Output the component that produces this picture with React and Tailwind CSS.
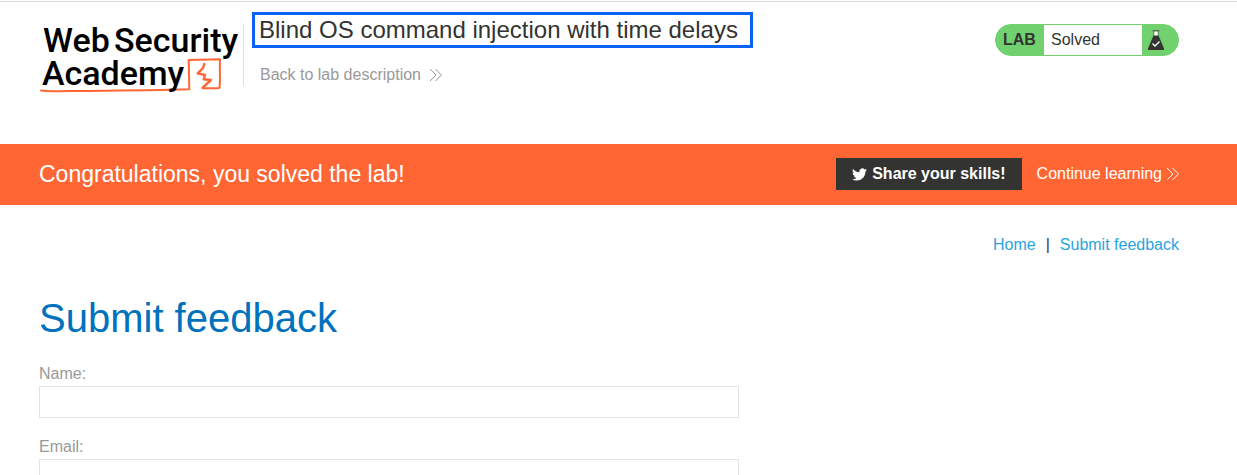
import clsx from "clsx";

const fields = [
  { id: "name", label: "Name:", type: "text" },
  { id: "email", label: "Email:", type: "email" },
];

function Chevrons({ className }) {
  return (
    <svg
      viewBox="0 0 14 14"
      className={clsx("h-[14px] w-[14px]", className)}
      fill="none"
      stroke="currentColor"
      aria-hidden="true"
    >
      <path d="M1 1l6 6-6 6M6.500 1l6 6-6 6" />
    </svg>
  );
}

function Logo() {
  return (
    <svg viewBox="0 0 204 76" className="block h-[76px] w-[204px]">
      {/* Underline running into the spark box */}
      <g fill="none" stroke="#ff6633" strokeWidth="2" strokeLinecap="round" strokeLinejoin="round">
        <path d="M2 71.500C8 72.600 20 72.200 40 72S110 71.500 150.300 70.300L149.700 41C159 40.300 170 40.500 181 40.300C180.500 50 181.500 60 180.500 69C174 69.500 168 69 163.700 69.200" />
        <path
          strokeWidth="2.400"
          d="M165.300 45L164 49L158.700 54.300L166 56L164.700 60.300L172 61L163.700 68.700"
        />
      </g>
      <text fill="#000" fontFamily="Roboto, sans-serif" fontSize="34" fontWeight="500">
        <tspan x="4" y="33">Web</tspan>
        <tspan x="75" y="33">Security</tspan>
        <tspan x="3" y="66">Academy</tspan>
      </text>
    </svg>
  );
}

function Flask() {
  return (
    <svg viewBox="0 0 16 20" className="h-5 w-4" aria-hidden="true">
      <path d="M6 1h4v5H6z" fill="#fff" />
      <path d="M4.500 0h7v1.200h-1V6h-.8V1.500H6.300V6h-.8V1.200h-1z" fill="#55705a" />
      <path d="M5.500 5.500h5L16 18.500q.3 1.500-1 1.500H1q-1.300 0-1-1.500z" fill="#333332" />
      <path d="M4.500 13.500l2.500 2.500 4.500-4.500" fill="none" stroke="#fff" strokeWidth="1.300" />
    </svg>
  );
}

function Twitter() {
  return (
    <svg viewBox="0 0 24 24" className="h-[15px] w-[15px]" fill="currentColor" aria-hidden="true">
      <path d="M23.953 4.570a10 10 0 01-2.825.775 4.958 4.958 0 002.163-2.723c-.951.555-2.005.959-3.127 1.184a4.920 4.920 0 00-8.384 4.482C7.690 8.095 4.067 6.130 1.640 3.162a4.822 4.822 0 00-.666 2.475c0 1.710.87 3.213 2.188 4.096a4.904 4.904 0 01-2.228-.616v.06a4.923 4.923 0 003.946 4.827 4.996 4.996 0 01-2.212.085 4.936 4.936 0 004.604 3.417 9.867 9.867 0 01-6.102 2.105c-.39 0-.779-.023-1.170-.067a13.995 13.995 0 007.557 2.209c9.053 0 13.998-7.496 13.998-13.985 0-.21 0-.42-.015-.63A9.935 9.935 0 0024 4.590z" />
    </svg>
  );
}

function App() {
  return (
    <div className="min-h-screen bg-white pt-px font-['Liberation_Sans',Arial,sans-serif] text-base text-[#333332]">
      {/* Lab header */}
      <header className="flex h-[143px] items-start border-t border-[#d9d9d9] pr-[58px] pl-[39px]">
        <a href="#" aria-label="Web Security Academy" className="mt-[17px]">
          <Logo />
        </a>
        <div className="mt-[22px] h-[62px] w-px bg-[#e0e0e0]" />
        <div className="ml-2 pt-[10px]">
          <h2 className="border-3 border-[#0a63f5] pr-3 pl-1 text-2xl/[30px]">
            Blind OS command injection with time delays
          </h2>
          <a href="#" className="mt-[17px] ml-2 flex w-fit items-center gap-2 leading-5 text-[#999999]">
            Back to lab description
            <Chevrons />
          </a>
        </div>
        <div className="mt-[22px] ml-auto flex h-8 w-[184px] overflow-hidden rounded-full border border-[#70d16e] bg-[#70d16e]">
          <span className="w-12 pl-[7px] font-bold leading-[30px]">LAB</span>
          <span className="flex-1 bg-white pl-[7px] leading-[30px]">Solved</span>
          <span className="flex w-9 items-center pl-[6px]">
            <Flask />
          </span>
        </div>
      </header>

      {/* Solved banner */}
      <section className="flex h-[61px] items-center bg-[#ff6633] pr-[58px] pb-px pl-[39px] text-white">
        <h3 className="text-[23px]">Congratulations, you solved the lab!</h3>
        <button
          type="button"
          className="ml-auto flex h-8 items-center gap-[5px] bg-[#333332] px-4 font-bold"
        >
          <Twitter />
          Share your skills!
        </button>
        <a href="#" className="ml-[15px] flex items-center gap-1">
          Continue learning
          <Chevrons className="-mr-px" />
        </a>
      </section>

      {/* Page content */}
      <main className="pr-[58px] pl-[39px]">
        <nav className="flex justify-end gap-[10px] pt-7 leading-6 text-[#29a3e0]">
          <a href="#">Home</a>
          <span className="text-[#333366]">|</span>
          <a href="#">Submit feedback</a>
        </nav>
        <h1 className="mt-[37px] text-[40px]/[48px] text-[#0071bc]">Submit feedback</h1>
        <form className="mt-5 max-w-[700px]">
          {fields.map((field) => (
            <div key={field.id} className="mb-[17px]">
              <label htmlFor={field.id} className="block leading-6 text-[#999999]">
                {field.label}
              </label>
              <input
                id={field.id}
                type={field.type}
                className="block h-8 w-full border border-[#e3e3e3] px-2"
              />
            </div>
          ))}
        </form>
      </main>
    </div>
  );
}

export default App;
